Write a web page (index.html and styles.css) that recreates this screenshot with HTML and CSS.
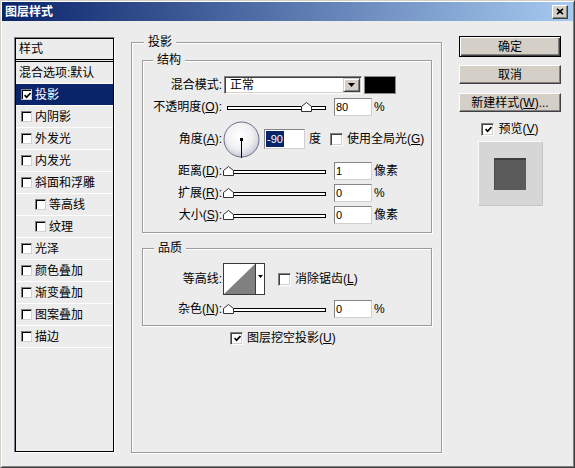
FILE: index.html
```html
<!DOCTYPE html>
<html lang="zh-CN">
<head>
<meta charset="utf-8">
<title>图层样式</title>
<link rel="stylesheet" href="styles.css">
</head>
<body>
<div class="window">
  <div class="titlebar">
    <span class="title">图层样式</span>
    <span class="close-btn"><svg width="8" height="7" viewBox="0 0 8 7"><path d="M1 0.8 L7 6.2 M7 0.8 L1 6.2" stroke="#000" stroke-width="1.7"/></svg></span>
  </div>

  <div class="content">
    <div class="stylelist">
      <div class="list-inner">
        <div class="list-head">样式</div>
        <div class="list-item">混合选项:默认</div>
        <div class="list-item cbx selected"><span class="lcb"><svg width="7" height="7" viewBox="0 0 7 7"><path d="M0.6 3.2 L2.6 5.3 L6.5 1" stroke="#000" stroke-width="1.7" fill="none"/></svg></span>投影</div>
        <div class="list-item cbx"><span class="lcb"></span>内阴影</div>
        <div class="list-item cbx"><span class="lcb"></span>外发光</div>
        <div class="list-item cbx"><span class="lcb"></span>内发光</div>
        <div class="list-item cbx"><span class="lcb"></span>斜面和浮雕</div>
        <div class="list-item cbx indent"><span class="lcb"></span>等高线</div>
        <div class="list-item cbx indent"><span class="lcb"></span>纹理</div>
        <div class="list-item cbx"><span class="lcb"></span>光泽</div>
        <div class="list-item cbx"><span class="lcb"></span>颜色叠加</div>
        <div class="list-item cbx"><span class="lcb"></span>渐变叠加</div>
        <div class="list-item cbx"><span class="lcb"></span>图案叠加</div>
        <div class="list-item cbx"><span class="lcb"></span>描边</div>
      </div>
    </div>

    <div class="group main-group">
      <div class="group-title main-title">投影</div>

      <div class="group sub-group struct">
        <div class="group-title">结构</div>
        <div class="form">
          <div class="lbl">混合模式:</div>
          <div class="ctrl">
            <div class="select">
              <span class="select-text">正常</span>
              <span class="select-btn"><svg width="7" height="4" viewBox="0 0 7 4"><path d="M0 0 H7 L3.5 4 Z" fill="#000"/></svg></span>
            </div>
            <div class="swatch"></div>
          </div>

          <div class="lbl">不透明度(<u>O</u>):</div>
          <div class="ctrl">
            <div class="slider"><div class="track"></div><svg class="thumb" style="left:77px" width="11" height="10" viewBox="0 0 11 10"><path d="M0.5 9.5 V4.5 L5.5 0.5 L10.5 4.5 V9.5 Z" fill="#fff" stroke="#333"/></svg></div>
            <div class="field">80</div>
            <span class="unit">%</span>
          </div>

          <div class="lbl">角度(<u>A</u>):</div>
          <div class="ctrl">
            <svg class="dial" width="37" height="37" viewBox="0 0 37 37">
              <defs>
                <radialGradient id="dg" cx="45%" cy="40%" r="62%">
                  <stop offset="0" stop-color="#ffffff"/>
                  <stop offset="0.6" stop-color="#f1f1f3"/>
                  <stop offset="1" stop-color="#c4c8d4"/>
                </radialGradient>
              </defs>
              <circle cx="18.5" cy="18.5" r="17.5" fill="url(#dg)" stroke="#6b7186"/>
              <line x1="18.5" y1="18" x2="18.5" y2="37" stroke="#000"/>
              <rect x="17" y="17" width="3" height="3" fill="#000"/>
            </svg>
            <div class="field angle"><span class="sel">-90</span></div>
            <span class="unit deg">度</span>
            <span class="cb global"></span>
            <span class="cb-text">使用全局光(<u>G</u>)</span>
          </div>

          <div class="lbl">距离(<u>D</u>):</div>
          <div class="ctrl">
            <div class="slider"><div class="track"></div><svg class="thumb" style="left:-1px" width="11" height="10" viewBox="0 0 11 10"><path d="M0.5 9.5 V4.5 L5.5 0.5 L10.5 4.5 V9.5 Z" fill="#fff" stroke="#333"/></svg></div>
            <div class="field">1</div>
            <span class="unit">像素</span>
          </div>

          <div class="lbl">扩展(<u>R</u>):</div>
          <div class="ctrl">
            <div class="slider"><div class="track"></div><svg class="thumb" style="left:-1px" width="11" height="10" viewBox="0 0 11 10"><path d="M0.5 9.5 V4.5 L5.5 0.5 L10.5 4.5 V9.5 Z" fill="#fff" stroke="#333"/></svg></div>
            <div class="field">0</div>
            <span class="unit">%</span>
          </div>

          <div class="lbl">大小(<u>S</u>):</div>
          <div class="ctrl">
            <div class="slider"><div class="track"></div><svg class="thumb" style="left:-1px" width="11" height="10" viewBox="0 0 11 10"><path d="M0.5 9.5 V4.5 L5.5 0.5 L10.5 4.5 V9.5 Z" fill="#fff" stroke="#333"/></svg></div>
            <div class="field">0</div>
            <span class="unit">像素</span>
          </div>
        </div>
      </div>

      <div class="group sub-group quality">
        <div class="group-title">品质</div>
        <div class="form">
          <div class="lbl">等高线:</div>
          <div class="ctrl">
            <svg class="contour" width="42" height="32" viewBox="0 0 42 32">
              <rect x="0.5" y="0.5" width="41" height="31" fill="#fff" stroke="#3a3a3a"/>
              <polygon points="1,31 32,1 32,31" fill="#808080"/>
              <line x1="32.5" y1="0" x2="32.5" y2="32" stroke="#3a3a3a"/>
              <path d="M35 12 H40 L37.5 15 Z" fill="#000"/>
            </svg>
            <span class="cb aa"></span>
            <span class="cb-text">消除锯齿(<u>L</u>)</span>
          </div>

          <div class="lbl">杂色(<u>N</u>):</div>
          <div class="ctrl">
            <div class="slider"><div class="track"></div><svg class="thumb" style="left:-1px" width="11" height="10" viewBox="0 0 11 10"><path d="M0.5 9.5 V4.5 L5.5 0.5 L10.5 4.5 V9.5 Z" fill="#fff" stroke="#333"/></svg></div>
            <div class="field">0</div>
            <span class="unit">%</span>
          </div>
        </div>
      </div>

      <div class="knock">
        <span class="cb"><svg width="7" height="7" viewBox="0 0 7 7"><path d="M0.6 3.2 L2.6 5.3 L6.5 1" stroke="#000" stroke-width="1.7" fill="none"/></svg></span>
        <span class="cb-text">图层挖空投影(<u>U</u>)</span>
      </div>
    </div>

    <div class="actions">
      <div class="btn default">确定</div>
      <div class="btn cancel">取消</div>
      <div class="btn newstyle">新建样式(<u>W</u>)...</div>
      <div class="preview-row">
        <span class="cb"><svg width="7" height="7" viewBox="0 0 7 7"><path d="M0.6 3.2 L2.6 5.3 L6.5 1" stroke="#000" stroke-width="1.7" fill="none"/></svg></span>
        <span class="cb-text">预览(<u>V</u>)</span>
      </div>
      <div class="preview"><div class="preview-swatch"></div></div>
    </div>
  </div>
</div>
</body>
</html>
```

FILE: styles.css
```css
* { box-sizing: border-box; }

html, body { margin: 0; padding: 0; }

body {
  width: 575px;
  height: 468px;
  overflow: hidden;
  background: #ececec;
  font-family: "Liberation Sans", "Noto Sans CJK SC", sans-serif;
  font-size: 12px;
  line-height: 14px;
  color: #000;
}

u { text-decoration: underline; }

.window {
  width: 575px;
  height: 468px;
  border: 1px solid;
  border-color: #d4d0c8 #404040 #404040 #d4d0c8;
  padding: 1px;
  box-shadow: inset 1px 1px 0 #fff, inset -1px -1px 0 #808080;
  background: #ececec;
  display: flex;
  flex-direction: column;
}

/* title bar */
.titlebar {
  height: 19px;
  flex: none;
  display: flex;
  align-items: center;
  justify-content: space-between;
  padding: 0 5px 0 3px;
  background: linear-gradient(to right, #0a246a, #a6caf0);
}

.title {
  color: #fff;
  font-weight: bold;
  font-size: 12px;
  line-height: 14px;
}

.close-btn {
  width: 16px;
  height: 14px;
  background: #d4d0c8;
  border: 1px solid;
  border-color: #fff #404040 #404040 #fff;
  box-shadow: inset -1px -1px 0 #808080;
  display: flex;
  align-items: center;
  justify-content: center;
}

.close-btn svg { display: block; }

/* main content */
.content {
  flex: 1;
  display: flex;
  padding: 15px 11px 13px 12px;
}

/* style list */
.stylelist {
  width: 101px;
  flex: none;
  margin-top: 1px;
  border: 1px solid;
  border-color: #808080 #fff #fff #808080;
  display: flex;
  flex-direction: column;
}

.list-inner {
  flex: 1;
  border: 1px solid #000;
}

.list-head {
  height: 23px;
  padding-left: 3px;
  display: flex;
  align-items: center;
  border-bottom: 3px double #000;
}

.list-item {
  height: 22px;
  display: flex;
  align-items: center;
  padding-left: 3px;
  border-bottom: 1px solid #fff;
  white-space: nowrap;
}

.list-item.cbx { padding-left: 5px; }
.list-item.indent { padding-left: 19px; }

.list-item.selected {
  background: #0a246a;
  color: #fff;
}

.lcb {
  width: 11px;
  height: 11px;
  flex: none;
  margin-right: 3px;
  background: #fff;
  border: 1px solid;
  border-color: #808080 #d4d0c8 #d4d0c8 #808080;
  box-shadow: inset 1px 1px 0 #000;
  display: flex;
  align-items: center;
  justify-content: center;
}

.lcb svg { display: block; margin: 1px 0 0 1px; }

/* group boxes */
.group {
  border: 1px solid #9c9c9c;
  box-shadow: inset 1px 1px 0 #fff, 1px 1px 0 #fff;
}

.group-title {
  width: max-content;
  height: 12px;
  line-height: 12px;
  margin: -7px 0 0 10px;
  padding: 0 4px;
  background: #ececec;
  white-space: nowrap;
}

.main-group {
  width: 311px;
  flex: none;
  margin: 6px 0 0 16px;
  padding: 0 9px 0 10px;
}

.group-title.main-title { margin-left: 2px; }

.struct {
  margin-top: 12px;
  padding-bottom: 6px;
}

.quality {
  margin-top: 15px;
  padding-bottom: 5px;
}

.quality .group-title { margin-left: 11px; }

.form {
  display: grid;
  grid-template-columns: 79px auto;
  column-gap: 2px;
  align-items: center;
}

.struct .form {
  margin-top: 8px;
  grid-template-rows: 22px 22px 42px 22px 22px 22px;
}

.quality .form {
  margin-top: 9px;
  grid-template-rows: 32px 22px;
  row-gap: 3px;
}

.lbl {
  text-align: right;
  white-space: nowrap;
}

.ctrl {
  display: flex;
  align-items: center;
  white-space: nowrap;
}

/* select */
.select {
  width: 138px;
  height: 18px;
  display: flex;
  align-items: center;
  background: #fff;
  border: 1px solid;
  border-color: #808080 #fff #fff #808080;
  box-shadow: inset 1px 1px 0 #404040, inset -1px -1px 0 #d4d0c8;
  padding: 1px 1px 1px 5px;
}

.select-text { flex: 1; }

.select-btn {
  width: 17px;
  height: 14px;
  background: #d4d0c8;
  border: 1px solid;
  border-color: #d4d0c8 #404040 #404040 #d4d0c8;
  box-shadow: inset 1px 1px 0 #fff, inset -1px -1px 0 #808080;
  display: flex;
  align-items: center;
  justify-content: center;
}

.select-btn svg { display: block; }

.swatch {
  width: 32px;
  height: 18px;
  margin-left: 2px;
  background: #000;
  border: 1px solid #8a8a8a;
}

/* slider */
.slider {
  position: relative;
  width: 102px;
  height: 11px;
  flex: none;
  padding: 4px 0 0 3px;
}

.track {
  height: 4px;
  border: 1px solid #000;
  background: #fff;
}

.thumb {
  position: absolute;
  top: 0;
  display: block;
}

/* numeric fields */
.field {
  width: 38px;
  height: 18px;
  flex: none;
  margin-left: 8px;
  padding-left: 1px;
  background: #fff;
  border: 1px solid;
  border-color: #858585 #d0d0d0 #d0d0d0 #858585;
  font-family: "Liberation Sans", sans-serif;
  font-size: 11px;
  line-height: 16px;
}

.field.angle {
  width: 41px;
  height: 20px;
  margin-left: 4px;
  line-height: 18px;
}

.sel {
  display: inline-block;
  padding: 0 1px;
  background: #0a246a;
  color: #fff;
  line-height: 16px;
}

.unit { margin-left: 2px; }
.unit.deg { margin-left: 4px; }

.dial {
  display: block;
  margin-left: -1px;
  flex: none;
}

.contour {
  display: block;
  margin-left: -1px;
  flex: none;
}

/* checkboxes */
.cb {
  width: 13px;
  height: 13px;
  flex: none;
  background: #fff;
  border: 1px solid;
  border-color: #808080 #fff #fff #808080;
  box-shadow: inset 1px 1px 0 #404040, inset -1px -1px 0 #d4d0c8;
  display: flex;
  align-items: center;
  justify-content: center;
}

.cb svg { display: block; margin: 1px 0 0 1px; }

.cb-text { margin-left: 4px; white-space: nowrap; }

.cb.global { margin-left: 9px; }
.cb.aa { margin-left: 13px; }

.knock {
  height: 14px;
  display: flex;
  align-items: center;
  margin: 5px 0 0 88px;
}

/* right column */
.actions {
  width: 102px;
  flex: none;
  margin-left: 17px;
  display: flex;
  flex-direction: column;
  align-items: center;
}

.btn {
  width: 102px;
  height: 19px;
  flex: none;
  display: flex;
  align-items: center;
  justify-content: center;
  background: #d4d0c8;
  border: 1px solid;
  border-color: #fff #404040 #404040 #fff;
  box-shadow: inset -1px -1px 0 #808080;
  white-space: nowrap;
}

.btn.default {
  height: 21px;
  border-color: #000;
  box-shadow: inset 1px 1px 0 #fff, inset -1px -1px 0 #404040, inset -2px -2px 0 #808080;
}

.btn.cancel { margin-top: 8px; }
.btn.newstyle { margin-top: 9px; }

.preview-row {
  height: 14px;
  margin-top: 10px;
  display: flex;
  align-items: center;
}

.preview {
  width: 65px;
  height: 65px;
  margin-top: 5px;
  background: #d6d6d6;
  border: 1px solid;
  border-color: #f8f8f8 #c4c4c4 #c4c4c4 #f8f8f8;
  display: flex;
  align-items: center;
  justify-content: center;
}

.preview-swatch {
  width: 32px;
  height: 32px;
  background: #5b5b5b;
  border-top: 2px solid #3c3c3c;
  border-left: 1px solid #4a4a4a;
}
```
